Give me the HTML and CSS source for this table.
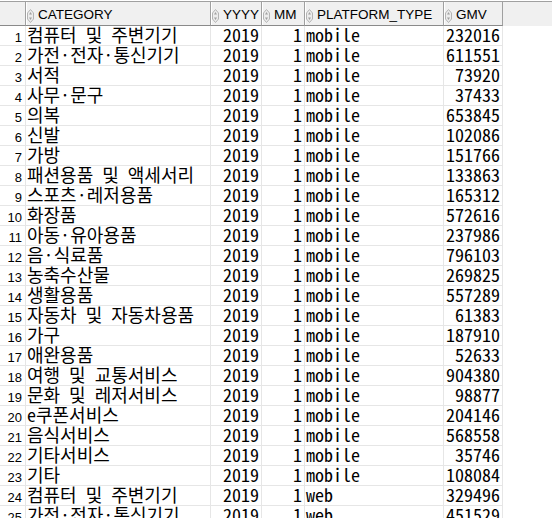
FILE: index.html
```html
<!DOCTYPE html>
<html>
<head>
<meta charset="utf-8">
<link rel="stylesheet" href="styles.css">
</head>
<body>
<div class="grid">
  <div class="head">
    <div class="hrow">
      <div class="hc rn"></div>
      <div class="hc"><svg class="sort" viewBox="0 0 7 14" width="7" height="14"><path d="M3.5 0.5 L6.5 4 L6.5 10 L3.5 13.5 L0.5 10 L0.5 4 Z" fill="#ececec" stroke="#b4b4b4"/><path d="M3.5 3 L5 5.5 L2 5.5 Z M3.5 11 L5 8.5 L2 8.5 Z" fill="#a0a0a0"/></svg><span>CATEGORY</span></div>
      <div class="hc"><svg class="sort" viewBox="0 0 7 14" width="7" height="14"><path d="M3.5 0.5 L6.5 4 L6.5 10 L3.5 13.5 L0.5 10 L0.5 4 Z" fill="#ececec" stroke="#b4b4b4"/><path d="M3.5 3 L5 5.5 L2 5.5 Z M3.5 11 L5 8.5 L2 8.5 Z" fill="#a0a0a0"/></svg><span>YYYY</span></div>
      <div class="hc"><svg class="sort" viewBox="0 0 7 14" width="7" height="14"><path d="M3.5 0.5 L6.5 4 L6.5 10 L3.5 13.5 L0.5 10 L0.5 4 Z" fill="#ececec" stroke="#b4b4b4"/><path d="M3.5 3 L5 5.5 L2 5.5 Z M3.5 11 L5 8.5 L2 8.5 Z" fill="#a0a0a0"/></svg><span>MM</span></div>
      <div class="hc"><svg class="sort" viewBox="0 0 7 14" width="7" height="14"><path d="M3.5 0.5 L6.5 4 L6.5 10 L3.5 13.5 L0.5 10 L0.5 4 Z" fill="#ececec" stroke="#b4b4b4"/><path d="M3.5 3 L5 5.5 L2 5.5 Z M3.5 11 L5 8.5 L2 8.5 Z" fill="#a0a0a0"/></svg><span>PLATFORM_TYPE</span></div>
      <div class="hc"><svg class="sort" viewBox="0 0 7 14" width="7" height="14"><path d="M3.5 0.5 L6.5 4 L6.5 10 L3.5 13.5 L0.5 10 L0.5 4 Z" fill="#ececec" stroke="#b4b4b4"/><path d="M3.5 3 L5 5.5 L2 5.5 Z M3.5 11 L5 8.5 L2 8.5 Z" fill="#a0a0a0"/></svg><span>GMV</span></div>
    </div>
  </div>
  <div class="row"><div class="c rn">1</div><div class="c t">컴퓨터 및 주변기기</div><div class="c n">2019</div><div class="c n">1</div><div class="c t">mobile</div><div class="c n">232016</div></div>
  <div class="row"><div class="c rn">2</div><div class="c t">가전·전자·통신기기</div><div class="c n">2019</div><div class="c n">1</div><div class="c t">mobile</div><div class="c n">611551</div></div>
  <div class="row"><div class="c rn">3</div><div class="c t">서적</div><div class="c n">2019</div><div class="c n">1</div><div class="c t">mobile</div><div class="c n">73920</div></div>
  <div class="row"><div class="c rn">4</div><div class="c t">사무·문구</div><div class="c n">2019</div><div class="c n">1</div><div class="c t">mobile</div><div class="c n">37433</div></div>
  <div class="row"><div class="c rn">5</div><div class="c t">의복</div><div class="c n">2019</div><div class="c n">1</div><div class="c t">mobile</div><div class="c n">653845</div></div>
  <div class="row"><div class="c rn">6</div><div class="c t">신발</div><div class="c n">2019</div><div class="c n">1</div><div class="c t">mobile</div><div class="c n">102086</div></div>
  <div class="row"><div class="c rn">7</div><div class="c t">가방</div><div class="c n">2019</div><div class="c n">1</div><div class="c t">mobile</div><div class="c n">151766</div></div>
  <div class="row"><div class="c rn">8</div><div class="c t">패션용품 및 액세서리</div><div class="c n">2019</div><div class="c n">1</div><div class="c t">mobile</div><div class="c n">133863</div></div>
  <div class="row"><div class="c rn">9</div><div class="c t">스포츠·레저용품</div><div class="c n">2019</div><div class="c n">1</div><div class="c t">mobile</div><div class="c n">165312</div></div>
  <div class="row"><div class="c rn">10</div><div class="c t">화장품</div><div class="c n">2019</div><div class="c n">1</div><div class="c t">mobile</div><div class="c n">572616</div></div>
  <div class="row"><div class="c rn">11</div><div class="c t">아동·유아용품</div><div class="c n">2019</div><div class="c n">1</div><div class="c t">mobile</div><div class="c n">237986</div></div>
  <div class="row"><div class="c rn">12</div><div class="c t">음·식료품</div><div class="c n">2019</div><div class="c n">1</div><div class="c t">mobile</div><div class="c n">796103</div></div>
  <div class="row"><div class="c rn">13</div><div class="c t">농축수산물</div><div class="c n">2019</div><div class="c n">1</div><div class="c t">mobile</div><div class="c n">269825</div></div>
  <div class="row"><div class="c rn">14</div><div class="c t">생활용품</div><div class="c n">2019</div><div class="c n">1</div><div class="c t">mobile</div><div class="c n">557289</div></div>
  <div class="row"><div class="c rn">15</div><div class="c t">자동차 및 자동차용품</div><div class="c n">2019</div><div class="c n">1</div><div class="c t">mobile</div><div class="c n">61383</div></div>
  <div class="row"><div class="c rn">16</div><div class="c t">가구</div><div class="c n">2019</div><div class="c n">1</div><div class="c t">mobile</div><div class="c n">187910</div></div>
  <div class="row"><div class="c rn">17</div><div class="c t">애완용품</div><div class="c n">2019</div><div class="c n">1</div><div class="c t">mobile</div><div class="c n">52633</div></div>
  <div class="row"><div class="c rn">18</div><div class="c t">여행 및 교통서비스</div><div class="c n">2019</div><div class="c n">1</div><div class="c t">mobile</div><div class="c n">904380</div></div>
  <div class="row"><div class="c rn">19</div><div class="c t">문화 및 레저서비스</div><div class="c n">2019</div><div class="c n">1</div><div class="c t">mobile</div><div class="c n">98877</div></div>
  <div class="row"><div class="c rn">20</div><div class="c t">e쿠폰서비스</div><div class="c n">2019</div><div class="c n">1</div><div class="c t">mobile</div><div class="c n">204146</div></div>
  <div class="row"><div class="c rn">21</div><div class="c t">음식서비스</div><div class="c n">2019</div><div class="c n">1</div><div class="c t">mobile</div><div class="c n">568558</div></div>
  <div class="row"><div class="c rn">22</div><div class="c t">기타서비스</div><div class="c n">2019</div><div class="c n">1</div><div class="c t">mobile</div><div class="c n">35746</div></div>
  <div class="row"><div class="c rn">23</div><div class="c t">기타</div><div class="c n">2019</div><div class="c n">1</div><div class="c t">mobile</div><div class="c n">108084</div></div>
  <div class="row"><div class="c rn">24</div><div class="c t">컴퓨터 및 주변기기</div><div class="c n">2019</div><div class="c n">1</div><div class="c t">web</div><div class="c n">329496</div></div>
  <div class="row"><div class="c rn">25</div><div class="c t">가전·전자·통신기기</div><div class="c n">2019</div><div class="c n">1</div><div class="c t">web</div><div class="c n">451529</div></div>
</div>
</body>
</html>
```
FILE: styles.css
```css
html, body {
  margin: 0;
  padding: 0;
  background: #fff;
}
body {
  width: 552px;
  height: 518px;
  overflow: hidden;
}
.grid {
  padding-top: 1px;
}
.head {
  background: #f0f0f0;
  border-top: 1px solid #a0a0a0;
  height: 24px;
}
.hrow, .row {
  display: grid;
  grid-template-columns: 26px 185px 51px 43px 139px 59px;
  width: 503px;
}
.hc {
  box-sizing: border-box;
  height: 24px;
  border-right: 1px solid #a0a0a0;
  border-bottom: 1px solid #8a8a8a;
  box-shadow: inset 1px 0 #ffffff;
  display: flex;
  align-items: flex-start;
  padding-left: 1px;
  font-family: "Liberation Sans", Arial, sans-serif;
  font-size: 13.5px;
  color: #000;
  white-space: nowrap;
}
.hc.rn {
  box-shadow: none;
}
.hc .sort {
  flex: none;
  margin-top: 7px;
  margin-right: 4px;
}
.hc span {
  padding-top: 3px;
  line-height: 20px;
}
.row {
  height: 20px;
}
.c {
  box-sizing: border-box;
  height: 20px;
  border-right: 1px solid #e6e6e6;
  border-bottom: 1px solid #e6e6e6;
  white-space: nowrap;
  color: #000;
  font-family: "Noto Sans Mono CJK KR", "DejaVu Sans Mono", "Noto Sans CJK KR", monospace;
  font-size: 18px;
  line-height: 17px;
}
.c.rn {
  font-family: "Liberation Sans", Arial, sans-serif;
  font-size: 13px;
  line-height: 15px;
  padding-top: 4px;
  padding-right: 3px;
  text-align: right;
}
.c.t {
  padding-left: 1px;
}
.c.n {
  text-align: right;
  padding-right: 2px;
}
```
